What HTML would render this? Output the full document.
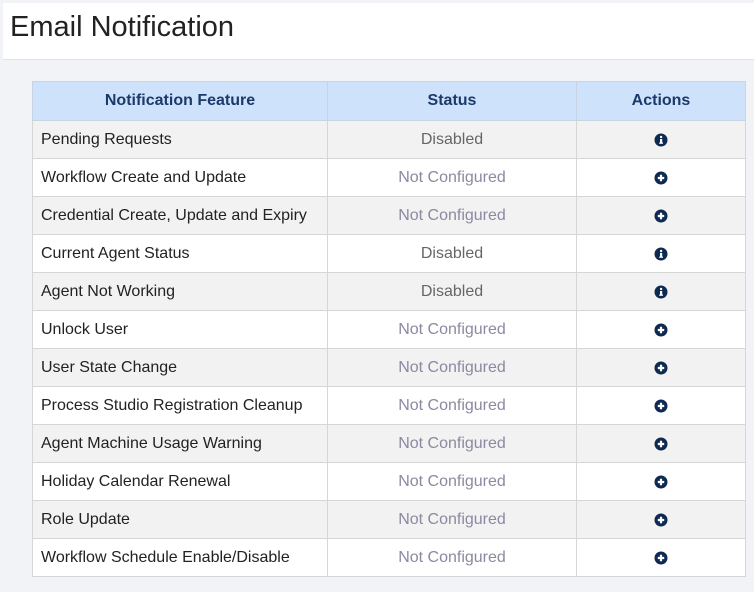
<!DOCTYPE html>
<html><head><style>
body{margin:0;width:754px;height:592px;background:#f2f3f6;font-family:"Liberation Sans",Arial,sans-serif;overflow:hidden}
.hd{position:absolute;left:3px;top:3px;width:751px;height:56px;background:#fff;border-bottom:1px solid #e2e3e6}
.hd h1{margin:0;position:absolute;left:7px;top:8px;font-size:29px;font-weight:normal;color:#222}
table{position:absolute;left:32px;top:81px;border-collapse:collapse;font-size:16px}
td,th{border:1px solid #d6d6d6;height:38px;padding:0;box-sizing:border-box}
th{background:#cfe2fb;color:#1b3a6b;font-weight:bold;text-align:center;border-color:#c8d4e4}
td.f{padding-left:8px;color:#222}
td.s{text-align:center;color:#8a8aa0}
td.d{color:#666}
td.a{text-align:center}
tr:nth-child(even) td{background:#f2f2f2}
tr:nth-child(odd) td{background:#fff}
svg{display:block;margin:auto}
</style></head><body>
<div class="hd"><h1>Email Notification</h1></div>
<table>
<tr><th style="width:295px;height:39px">Notification Feature</th><th style="width:249px">Status</th><th style="width:169px">Actions</th></tr>
<tr><td class="f">Pending Requests</td><td class="s d">Disabled</td><td class="a"><svg width="14" height="14" viewBox="0 0 14 14"><circle cx="7" cy="7" r="6.5" fill="#0f2a52"/><rect x="6" y="6" width="2.2" height="4.5" fill="#fff"/><rect x="5.2" y="9.6" width="3.8" height="1.2" fill="#fff"/><circle cx="7.1" cy="4" r="1.2" fill="#fff"/></svg></td></tr>
<tr><td class="f">Workflow Create and Update</td><td class="s">Not Configured</td><td class="a"><svg width="14" height="14" viewBox="0 0 14 14"><circle cx="7" cy="7" r="6.5" fill="#0f2a52"/><path d="M7 3.8v6.4M3.8 7h6.4" stroke="#fff" stroke-width="2.2"/></svg></td></tr>
<tr><td class="f">Credential Create, Update and Expiry</td><td class="s">Not Configured</td><td class="a"><svg width="14" height="14" viewBox="0 0 14 14"><circle cx="7" cy="7" r="6.5" fill="#0f2a52"/><path d="M7 3.8v6.4M3.8 7h6.4" stroke="#fff" stroke-width="2.2"/></svg></td></tr>
<tr><td class="f">Current Agent Status</td><td class="s d">Disabled</td><td class="a"><svg width="14" height="14" viewBox="0 0 14 14"><circle cx="7" cy="7" r="6.5" fill="#0f2a52"/><rect x="6" y="6" width="2.2" height="4.5" fill="#fff"/><rect x="5.2" y="9.6" width="3.8" height="1.2" fill="#fff"/><circle cx="7.1" cy="4" r="1.2" fill="#fff"/></svg></td></tr>
<tr><td class="f">Agent Not Working</td><td class="s d">Disabled</td><td class="a"><svg width="14" height="14" viewBox="0 0 14 14"><circle cx="7" cy="7" r="6.5" fill="#0f2a52"/><rect x="6" y="6" width="2.2" height="4.5" fill="#fff"/><rect x="5.2" y="9.6" width="3.8" height="1.2" fill="#fff"/><circle cx="7.1" cy="4" r="1.2" fill="#fff"/></svg></td></tr>
<tr><td class="f">Unlock User</td><td class="s">Not Configured</td><td class="a"><svg width="14" height="14" viewBox="0 0 14 14"><circle cx="7" cy="7" r="6.5" fill="#0f2a52"/><path d="M7 3.8v6.4M3.8 7h6.4" stroke="#fff" stroke-width="2.2"/></svg></td></tr>
<tr><td class="f">User State Change</td><td class="s">Not Configured</td><td class="a"><svg width="14" height="14" viewBox="0 0 14 14"><circle cx="7" cy="7" r="6.5" fill="#0f2a52"/><path d="M7 3.8v6.4M3.8 7h6.4" stroke="#fff" stroke-width="2.2"/></svg></td></tr>
<tr><td class="f">Process Studio Registration Cleanup</td><td class="s">Not Configured</td><td class="a"><svg width="14" height="14" viewBox="0 0 14 14"><circle cx="7" cy="7" r="6.5" fill="#0f2a52"/><path d="M7 3.8v6.4M3.8 7h6.4" stroke="#fff" stroke-width="2.2"/></svg></td></tr>
<tr><td class="f">Agent Machine Usage Warning</td><td class="s">Not Configured</td><td class="a"><svg width="14" height="14" viewBox="0 0 14 14"><circle cx="7" cy="7" r="6.5" fill="#0f2a52"/><path d="M7 3.8v6.4M3.8 7h6.4" stroke="#fff" stroke-width="2.2"/></svg></td></tr>
<tr><td class="f">Holiday Calendar Renewal</td><td class="s">Not Configured</td><td class="a"><svg width="14" height="14" viewBox="0 0 14 14"><circle cx="7" cy="7" r="6.5" fill="#0f2a52"/><path d="M7 3.8v6.4M3.8 7h6.4" stroke="#fff" stroke-width="2.2"/></svg></td></tr>
<tr><td class="f">Role Update</td><td class="s">Not Configured</td><td class="a"><svg width="14" height="14" viewBox="0 0 14 14"><circle cx="7" cy="7" r="6.5" fill="#0f2a52"/><path d="M7 3.8v6.4M3.8 7h6.4" stroke="#fff" stroke-width="2.2"/></svg></td></tr>
<tr><td class="f">Workflow Schedule Enable/Disable</td><td class="s">Not Configured</td><td class="a"><svg width="14" height="14" viewBox="0 0 14 14"><circle cx="7" cy="7" r="6.5" fill="#0f2a52"/><path d="M7 3.8v6.4M3.8 7h6.4" stroke="#fff" stroke-width="2.2"/></svg></td></tr>
</table>
</body></html>
